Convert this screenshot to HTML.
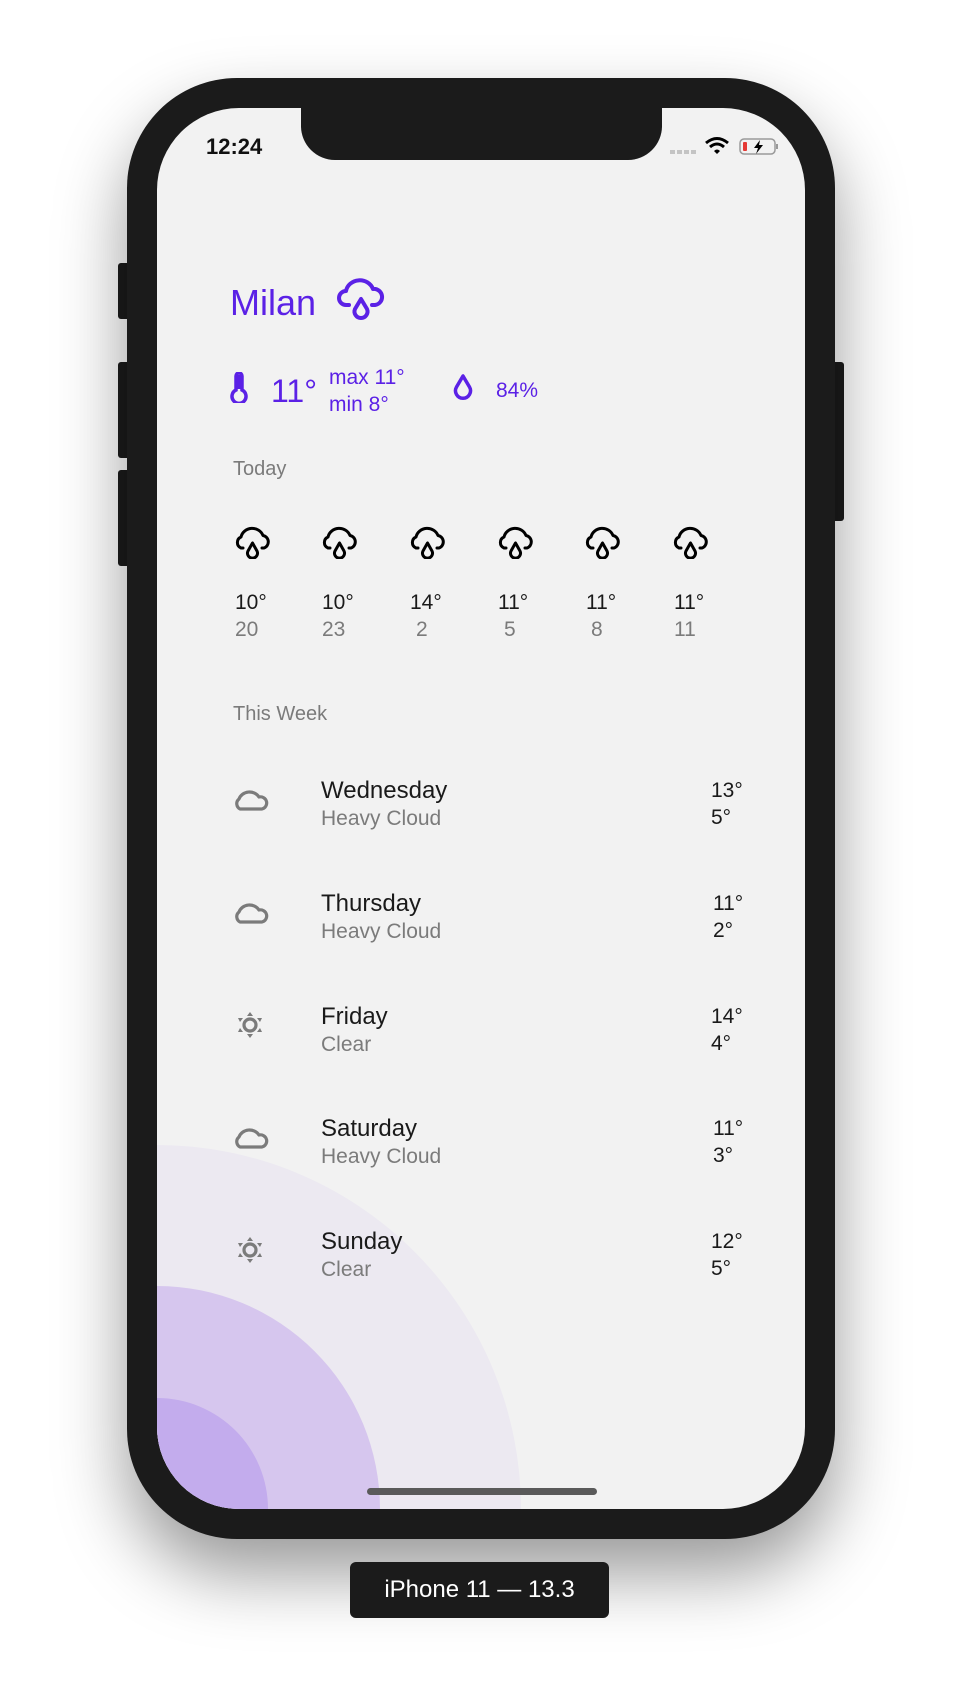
<!DOCTYPE html>
<html style="width:966px;height:1696px;overflow:hidden"><head><meta charset="utf-8"><style>
*{margin:0;padding:0;box-sizing:border-box}
body{width:966px;height:1696px;background:#fff;position:relative;overflow:hidden;font-family:"Liberation Sans",sans-serif}
.abs{position:absolute}
.phone{left:127px;top:78px;width:708px;height:1461px;background:#1b1b1b;border-radius:110px;box-shadow:0 35px 70px rgba(0,0,0,.4)}
.btn{background:#1b1b1b;border-radius:3px}
.screen{left:157px;top:108px;width:648px;height:1401px;background:#f2f2f2;border-radius:82px;overflow:hidden}
.t{position:absolute;white-space:nowrap;line-height:1}
.p{color:#5b21e6}
.g{color:#7b7b7b}
.k{color:#1a1a1a}
</style></head><body>
<div class="abs btn" style="left:118px;top:263px;width:12px;height:56px"></div>
<div class="abs btn" style="left:118px;top:362px;width:12px;height:96px"></div>
<div class="abs btn" style="left:118px;top:470px;width:12px;height:96px"></div>
<div class="abs btn" style="left:832px;top:362px;width:12px;height:159px"></div>
<div class="abs phone"></div>
<div class="abs screen">
  <div class="abs" style="left:-364px;top:1037px;width:728px;height:728px;border-radius:50%;background:#ece9f1"></div>
  <div class="abs" style="left:-223px;top:1178px;width:446px;height:446px;border-radius:50%;background:#d6c6ee"></div>
  <div class="abs" style="left:-111px;top:1290px;width:222px;height:222px;border-radius:50%;background:#c3aced"></div>
  <div class="abs" style="left:144px;top:-10px;width:361px;height:62px;background:#1b1b1b;border-radius:0 0 34px 34px"></div>
  <div class="abs" style="left:210px;top:1380px;width:230px;height:7px;border-radius:4px;background:#5a5a5a"></div>
</div>
<div class="t" style="left:206px;top:136px;font-size:22px;font-weight:bold;color:#111">12:24</div>
<div class="abs" style="left:670px;top:150px;width:26px;height:4px;background:repeating-linear-gradient(90deg,#c4c4c4 0 5px,transparent 5px 7px)"></div>
<svg class="abs" style="left:704px;top:136px" width="26" height="20" viewBox="0 0 26 20"><path d="M2 7 Q13 -2 24 7" stroke="#000" stroke-width="3" fill="none"/><path d="M6 11 Q13 5 20 11" stroke="#000" stroke-width="3" fill="none"/><path d="M10 15 L13 18 L16 15 Q13 12 10 15Z" fill="#000"/></svg>
<svg class="abs" style="left:739px;top:137px" width="40" height="20" viewBox="0 0 40 20"><rect x="1" y="2" width="35" height="15" rx="4" fill="none" stroke="#999" stroke-width="1.5"/><rect x="4" y="5" width="4" height="9" rx="1" fill="#e53935"/><rect x="37" y="7" width="2" height="5" fill="#999"/><path d="M21 3 L15 11 H19 L17 17 L24 8 H20 Z" fill="#000"/></svg>
<div class="t p" style="left:230px;top:285px;font-size:36px">Milan</div>
<svg class="abs" style="left:337px;top:278px" width="48" height="42" viewBox="0 0 48 42"><path d="M12 27 H9 A7 7 0 0 1 9 13 A14 13 0 0 1 36 11 A7.5 7.5 0 0 1 38 27 H35" stroke="#5b21e6" stroke-width="4" fill="none" stroke-linecap="round" stroke-linejoin="round"/><path d="M24 21 L18 31 A6.5 6.5 0 1 0 30 31 Z" stroke="#5b21e6" stroke-width="4" fill="none" stroke-linejoin="round"/></svg>
<svg class="abs" style="left:230px;top:372px" width="18" height="31" viewBox="0 0 18 31"><path d="M6 4 A3 3 0 0 1 12 4 V18 A7 7 0 1 1 6 18 Z" stroke="#5b21e6" stroke-width="3.5" fill="none"/><rect x="6" y="3" width="6" height="14" fill="#5b21e6"/></svg>
<div class="t p" style="left:271px;top:375px;font-size:32px">11°</div>
<div class="t p" style="left:329px;top:367px;font-size:21px">max 11°</div>
<div class="t p" style="left:329px;top:394px;font-size:21px">min 8°</div>
<svg class="abs" style="left:453px;top:374px" width="20" height="27" viewBox="0 0 20 27"><path d="M10 2 L3.5 13 A7.5 7.5 0 1 0 16.5 13 Z" stroke="#5b21e6" stroke-width="3.5" fill="none" stroke-linejoin="round"/></svg>
<div class="t p" style="left:496px;top:380px;font-size:21px">84%</div>
<div class="t g" style="left:233px;top:459px;font-size:20px">Today</div>
<svg width="0" height="0" style="position:absolute;left:0;top:0"><defs><g id="rc"><path d="M10 22 H8 A6 6 0 0 1 8 11 A11.5 11 0 0 1 30 9.5 A6.5 6.5 0 0 1 31 22 H29" stroke="#000" stroke-width="3" fill="none" stroke-linecap="round" stroke-linejoin="round"/><path d="M19.5 17 L15 25 A5 5 0 1 0 24 25 Z" stroke="#000" stroke-width="3" fill="none" stroke-linejoin="round"/></g>
<g id="cl"><path d="M7 21 A6 6 0 0 1 6 11 A11 10 0 0 1 26 9 A6 6 0 0 1 29 21 Z" stroke="#7b7b7b" stroke-width="3.2" fill="none" stroke-linejoin="round"/></g>
<g id="sn"><circle cx="14" cy="14" r="6" stroke="#7b7b7b" stroke-width="3.2" fill="none"/><path d="M14 1 L17 5 H11Z M14 27 L17 23 H11Z M2 7 L7 7 L4 11Z M26 7 L21 7 L24 11Z M2 21 L7 21 L4 17Z M26 21 L21 21 L24 17Z" fill="#7b7b7b"/></g></defs></svg>
<svg class="abs" style="left:233px;top:526px" width="39" height="33"><use href="#rc"/></svg>
<svg class="abs" style="left:320px;top:526px" width="39" height="33"><use href="#rc"/></svg>
<svg class="abs" style="left:408px;top:526px" width="39" height="33"><use href="#rc"/></svg>
<svg class="abs" style="left:496px;top:526px" width="39" height="33"><use href="#rc"/></svg>
<svg class="abs" style="left:583px;top:526px" width="39" height="33"><use href="#rc"/></svg>
<svg class="abs" style="left:671px;top:526px" width="39" height="33"><use href="#rc"/></svg>
<div class="t k" style="left:235px;top:592px;font-size:21px">10°</div><div class="t g" style="left:235px;top:619px;font-size:21px">20</div>
<div class="t k" style="left:322px;top:592px;font-size:21px">10°</div><div class="t g" style="left:322px;top:619px;font-size:21px">23</div>
<div class="t k" style="left:410px;top:592px;font-size:21px">14°</div><div class="t g" style="left:416px;top:619px;font-size:21px">2</div>
<div class="t k" style="left:498px;top:592px;font-size:21px">11°</div><div class="t g" style="left:504px;top:619px;font-size:21px">5</div>
<div class="t k" style="left:586px;top:592px;font-size:21px">11°</div><div class="t g" style="left:591px;top:619px;font-size:21px">8</div>
<div class="t k" style="left:674px;top:592px;font-size:21px">11°</div><div class="t g" style="left:674px;top:619px;font-size:21px">11</div>
<div class="t g" style="left:233px;top:704px;font-size:20px">This Week</div>
<svg class="abs" style="left:233px;top:788px" width="36" height="28"><use href="#cl"/></svg>
<div class="t k" style="left:321px;top:779px;font-size:24px">Wednesday</div><div class="t g" style="left:321px;top:808px;font-size:21px">Heavy Cloud</div>
<div class="t k" style="left:711px;top:780px;font-size:21px">13°</div><div class="t k" style="left:711px;top:807px;font-size:21px">5°</div>
<svg class="abs" style="left:233px;top:901px" width="36" height="28"><use href="#cl"/></svg>
<div class="t k" style="left:321px;top:892px;font-size:24px">Thursday</div><div class="t g" style="left:321px;top:921px;font-size:21px">Heavy Cloud</div>
<div class="t k" style="left:713px;top:893px;font-size:21px">11°</div><div class="t k" style="left:713px;top:920px;font-size:21px">2°</div>
<svg class="abs" style="left:236px;top:1011px" width="28" height="28"><use href="#sn"/></svg>
<div class="t k" style="left:321px;top:1005px;font-size:24px">Friday</div><div class="t g" style="left:321px;top:1034px;font-size:21px">Clear</div>
<div class="t k" style="left:711px;top:1006px;font-size:21px">14°</div><div class="t k" style="left:711px;top:1033px;font-size:21px">4°</div>
<svg class="abs" style="left:233px;top:1126px" width="36" height="28"><use href="#cl"/></svg>
<div class="t k" style="left:321px;top:1117px;font-size:24px">Saturday</div><div class="t g" style="left:321px;top:1146px;font-size:21px">Heavy Cloud</div>
<div class="t k" style="left:713px;top:1118px;font-size:21px">11°</div><div class="t k" style="left:713px;top:1145px;font-size:21px">3°</div>
<svg class="abs" style="left:236px;top:1236px" width="28" height="28"><use href="#sn"/></svg>
<div class="t k" style="left:321px;top:1230px;font-size:24px">Sunday</div><div class="t g" style="left:321px;top:1259px;font-size:21px">Clear</div>
<div class="t k" style="left:711px;top:1231px;font-size:21px">12°</div><div class="t k" style="left:711px;top:1258px;font-size:21px">5°</div>
<div class="abs" style="left:350px;top:1562px;width:259px;height:56px;background:#1b1b1b;border-radius:6px;color:#fff;font-size:24px;text-align:center;line-height:56px">iPhone 11 — 13.3</div>
</body></html>
